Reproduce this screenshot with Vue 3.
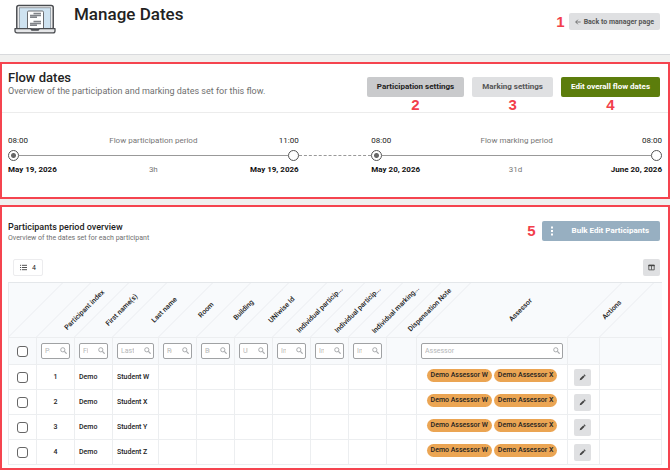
<script setup>
import { ref } from 'vue'

const periods = [
  { start: '08:00', startDate: 'May 19, 2026', label: 'Flow participation period', length: '3h', end: '11:00', endDate: 'May 19, 2026' },
  { start: '08:00', startDate: 'May 20, 2026', label: 'Flow marking period', length: '31d', end: '08:00', endDate: 'June 20, 2026' },
]

const columns = [
  { key: 'index', title: 'Participant index', filter: true },
  { key: 'first', title: 'First name(s)', filter: true },
  { key: 'last', title: 'Last name', filter: true },
  { key: 'room', title: 'Room', filter: true },
  { key: 'building', title: 'Building', filter: true },
  { key: 'uniwise', title: 'UNIwise Id', filter: true },
  { key: 'partStart', title: 'Individual particip...', filter: true },
  { key: 'partEnd', title: 'Individual particip...', filter: true },
  { key: 'marking', title: 'Individual marking...', filter: true },
  { key: 'note', title: 'Dispensation Note', filter: false },
  { key: 'assessor', title: 'Assessor', filter: true },
  { key: 'actions', title: 'Actions', filter: false },
]

const assessors = ['Demo Assessor W', 'Demo Assessor X']
const rows = ref([
  { index: 1, first: 'Demo', last: 'Student W', checked: false },
  { index: 2, first: 'Demo', last: 'Student X', checked: false },
  { index: 3, first: 'Demo', last: 'Student Y', checked: false },
  { index: 4, first: 'Demo', last: 'Student Z', checked: false },
])
</script>

<template>
  <div class="page">
    <header class="top">
      <svg class="laptop" viewBox="0 0 42 30" aria-hidden="true">
        <rect x="2.8" y="1.6" width="36.4" height="24" rx="2" fill="#fff" stroke="#4a4c50" stroke-width="1.5" />
        <rect x="5.2" y="3.8" width="31.6" height="20.6" fill="#cfe3f1" stroke="#6b7077" stroke-width=".7" />
        <path d="M13.5 24.500V8.200q0-1.200 1.200-1.200h13.600q1.200 0 1.200 1.200v16.300z" fill="#fff" stroke="#6a6c70" stroke-width="1" />
        <path d="M19.500 9.500h7.500M16 11.500h11M16 13.300h7M19.500 17.500h7.500M16 19.500h11M16 21.300h7" stroke="#808388" stroke-width="1.500" fill="none" />
        <path d="M1 24.600h15.600l1.400 1.600h6l1.400-1.600H41v2.300q0 1.900-2 1.900H3q-2 0-2-1.900z" fill="#e6e7e9" stroke="#4a4c50" stroke-width="1.300" stroke-linejoin="round" />
      </svg>
      <h1>Manage Dates</h1>
      <div class="marked">
        <button class="btn back" type="button">
          <svg viewBox="0 0 8 8" aria-hidden="true"><path d="M7.500 4H1M3.800 1L.9 4l2.900 3" fill="none" stroke="currentColor" stroke-width="1" /></svg>
          Back to manager page
        </button>
        <span class="mark side">1</span>
      </div>
    </header>

    <section class="panel flow">
      <div class="panel-head">
        <div>
          <h2>Flow dates</h2>
          <p>Overview of the participation and marking dates set for this flow.</p>
        </div>
        <div class="buttons">
          <div class="marked">
            <button class="btn pressed" type="button">Participation settings</button>
            <span class="mark below">2</span>
          </div>
          <div class="marked">
            <button class="btn" type="button">Marking settings</button>
            <span class="mark below">3</span>
          </div>
          <div class="marked">
            <button class="btn green" type="button">Edit overall flow dates</button>
            <span class="mark below">4</span>
          </div>
        </div>
      </div>

      <div class="timeline">
        <template v-for="(p, i) in periods" :key="p.label">
          <div v-if="i" class="pause"></div>
          <div class="period">
            <div class="line-text">
              <span>{{ p.start }}</span><span class="soft">{{ p.label }}</span><span>{{ p.end }}</span>
            </div>
            <div class="track">
              <i class="stop filled"></i><i class="rail"></i><i class="stop"></i>
            </div>
            <div class="line-text dates">
              <b>{{ p.startDate }}</b><span class="soft">{{ p.length }}</span><b>{{ p.endDate }}</b>
            </div>
          </div>
        </template>
      </div>
    </section>

    <section class="panel people">
      <div class="panel-head">
        <div>
          <h3>Participants period overview</h3>
          <p>Overview of the dates set for each participant</p>
        </div>
        <div class="marked">
          <button class="btn bulk" type="button">
            <svg viewBox="0 0 4 10" aria-hidden="true"><path d="M1 .5h2v2H1zM1 4h2v2H1zM1 7.500h2v2H1z" fill="currentColor" /></svg>
            <span>Bulk Edit Participants</span>
          </button>
          <span class="mark side">5</span>
        </div>
      </div>

      <div class="tools">
        <button class="count" type="button">
          <svg viewBox="0 0 8 8" aria-hidden="true"><path d="M0 1.500h1.200M0 4h1.200M0 6.500h1.200M2.200 1.500H8M2.200 4H8M2.200 6.500H8" stroke="currentColor" stroke-width=".9" /></svg>
          4
        </button>
        <button class="square" type="button" aria-label="Columns">
          <svg viewBox="0 0 8 8" aria-hidden="true"><path d="M.9 1.300h6.200v5.400H.9zM4 1.500v5" fill="none" stroke="currentColor" stroke-width=".9" /><path d="M.5 1h7v1.500h-7z" fill="currentColor" /></svg>
        </button>
      </div>

      <div class="table-box">
        <table>
          <colgroup>
            <col class="c-check" />
            <col v-for="c in columns" :key="c.key" :class="'c-' + c.key" />
            <col class="c-rest" />
          </colgroup>
          <thead>
            <tr class="titles">
              <th></th>
              <th v-for="c in columns" :key="c.key" scope="col">
                <div class="slant"><span>{{ c.title }}</span></div>
              </th>
              <th></th>
            </tr>
            <tr class="filters">
              <td class="mid"><input type="checkbox" aria-label="Select all" /></td>
              <td v-for="c in columns" :key="c.key">
                <label v-if="c.filter" class="filter">
                  <input type="text" :placeholder="c.title" :aria-label="c.title" />
                  <svg viewBox="0 0 8 8" aria-hidden="true"><circle cx="3.200" cy="3.200" r="2.400" fill="none" stroke="currentColor" stroke-width="1.100" /><path d="M5 5l2.600 2.600" stroke="currentColor" stroke-width="1.400" /></svg>
                </label>
              </td>
              <td></td>
            </tr>
          </thead>
          <tbody>
            <tr v-for="r in rows" :key="r.index">
              <td class="mid"><input v-model="r.checked" type="checkbox" :aria-label="'Select ' + r.last" /></td>
              <td class="mid">{{ r.index }}</td>
              <td>{{ r.first }}</td>
              <td>{{ r.last }}</td>
              <td v-for="n in 7" :key="n"></td>
              <td class="pills">
                <div><span v-for="a in assessors" :key="a">{{ a }}</span></div>
              </td>
              <td class="edit">
                <button class="square" type="button" :aria-label="'Edit ' + r.last">
                  <svg viewBox="0 0 8 8" aria-hidden="true"><path d="M.8 7.200l.5-2.100L4.800 1.600l1.600 1.600L2.900 6.700zM5.200 1.200l.6-.6q.3-.2.600 0l1 1q.2.300 0 .6l-.6.6z" fill="currentColor" /></svg>
                </button>
              </td>
              <td></td>
            </tr>
          </tbody>
        </table>
      </div>
    </section>
  </div>
</template>

<style>
body {
  background: #f0f0ef;
}
</style>

<style scoped>
.page {
  font-family: Roboto, "Noto Sans", sans-serif;
  font-size: 8px;
  line-height: 10px;
  color: #222;
}
.page * {
  box-sizing: border-box;
}
h1, h2, h3, p {
  margin: 0;
  font-weight: 500;
}
button, input {
  font: inherit;
  color: inherit;
  margin: 0;
}
svg {
  display: block;
  flex: none;
}
.top {
  display: flex;
  align-items: flex-start;
  min-height: 55px;
  padding: 4px 10px 0 14px;
  margin-bottom: 7px;
  background: #fff;
  border-bottom: 1px solid #d9dadd;
}
.laptop {
  width: 42px;
  height: 30px;
}
h1 {
  flex: 1;
  margin-left: 18px;
  font-size: 17px;
  line-height: 20px;
}
.marked {
  position: relative;
}
.top .marked {
  margin-top: 9px;
}
.mark {
  position: absolute;
  font: bold 15px/16px "Liberation Sans", sans-serif;
  color: #f23f4b;
}
.mark.side {
  right: 100%;
  top: 50%;
  margin-right: 4px;
  transform: translateY(-50%);
}
.people .mark.side {
  margin-right: 6px;
}
.mark.below {
  top: 100%;
  left: 0;
  right: 0;
  text-align: center;
}
.btn {
  display: flex;
  align-items: center;
  justify-content: center;
  height: 20px;
  padding: 0 10px;
  border: 0;
  border-radius: 2px;
  background: #dfe0e2;
  color: #555;
  font-weight: 700;
  white-space: nowrap;
}
.btn.back {
  height: 17px;
  padding: 0 6px;
  gap: 3px;
  font-size: 7px;
}
.btn.back svg {
  width: 6px;
  height: 6px;
}
.btn.pressed {
  background: #c9cacc;
  color: #222;
}
.btn.green {
  background: #5c7d0c;
  color: #fff;
}
.btn.bulk {
  padding: 0 11px 0 8px;
  gap: 18px;
  background: #97afc1;
  color: #fff;
}
.btn.bulk svg {
  width: 4px;
  height: 10px;
}
.panel {
  background: #fff;
  border: 2px solid #f5444f;
}
.panel-head {
  display: flex;
  justify-content: space-between;
  align-items: flex-start;
  padding: 0 8px 0 6px;
}
.flow .panel-head {
  height: 49px;
  padding-top: 5px;
  border-bottom: 1px solid #ececec;
}
h2 {
  font-size: 13px;
  line-height: 17px;
}
.panel-head p {
  font-weight: 400;
  color: #6f6f6f;
}
.flow .panel-head p {
  font-size: 9px;
}
.buttons {
  display: flex;
  gap: 8px;
  margin-top: 8px;
}
.timeline {
  display: flex;
  padding: 23px 6px 22px;
}
.period {
  flex: 4;
}
.pause {
  flex: 1;
  margin-top: 19px;
  border-top: 1px dashed #999;
}
.line-text {
  display: flex;
  justify-content: space-between;
}
.line-text > :last-child {
  text-align: right;
}
.soft {
  color: #777;
}
.track {
  display: flex;
  align-items: center;
  padding: 4px 0;
}
.stop {
  width: 11px;
  height: 11px;
  border: 1px solid #555;
  border-radius: 50%;
  background: #fff;
}
.stop.filled {
  background: radial-gradient(circle, #666 2px, #fff 3px);
}
.rail {
  flex: 1;
  height: 1px;
  background: #999;
}
.dates b {
  color: #111;
}
.people {
  margin-top: 6px;
  padding-bottom: 3px;
}
.people .panel-head {
  padding-top: 14px;
}
h3 {
  font-size: 9px;
  line-height: 12px;
}
.people .panel-head p {
  font-size: 7px;
}
.tools {
  display: flex;
  justify-content: space-between;
  padding: 16px 8px 6px 11px;
}
.count {
  display: flex;
  align-items: center;
  gap: 5px;
  height: 17px;
  padding: 0 6px;
  border: 1px solid #ececee;
  border-radius: 2px;
  background: #fff;
  font-size: 7px;
}
.count svg,
.square svg {
  width: 7px;
  height: 7px;
}
.square {
  display: inline-flex;
  align-items: center;
  justify-content: center;
  width: 17px;
  height: 17px;
  padding: 0;
  border: 0;
  border-radius: 2px;
  background: #dfe0e2;
  color: #444;
  vertical-align: middle;
}
.table-box {
  margin: 0 6px;
  overflow: hidden;
}
table {
  width: 100%;
  table-layout: fixed;
  border-spacing: 0;
  font-size: 7px;
  line-height: 8px;
  font-weight: 500;
  border-top: 1px solid #e4e7ea;
  border-left: 1px solid #e9ebed;
}
.c-check { width: 28px; }
.c-index, .c-first, .c-room, .c-building, .c-uniwise, .c-partStart, .c-partEnd, .c-marking { width: 38px; }
.c-last { width: 46px; }
.c-note { width: 30px; }
.c-actions { width: 32px; }
.c-rest { width: 62px; }
thead {
  background: #f8fafc;
}
th, td {
  padding: 0 4px;
  border-bottom: 1px solid #eceef0;
}
td {
  height: 25px;
  border-right: 1px solid #eceef0;
}
.mid {
  text-align: center;
}
td.edit {
  padding: 0 6px;
}
.titles th {
  position: relative;
  height: 55px;
  padding: 0;
  font-weight: 500;
}
.titles th::before {
  content: "";
  position: absolute;
  inset: 0 auto 0 -1px;
  border-left: 1px solid #e9ecef;
  transform: skewX(-45deg);
  transform-origin: bottom left;
}
.slant {
  display: flex;
  align-items: center;
  justify-content: center;
  height: 54px;
  transform: translateX(28px);
}
.slant span {
  flex: none;
  white-space: nowrap;
  transform: rotate(-45deg);
}
.filters td {
  height: 27px;
}
.filter {
  position: relative;
  display: block;
  color: #a5a8ab;
}
.filter input {
  display: block;
  width: 100%;
  height: 16px;
  padding: 0 19px 0 3px;
  border: 1px solid #a0a2a4;
  border-radius: 2px;
  background: #fff;
  color: #333;
  font-weight: 400;
}
.filter input::placeholder {
  color: #b4b6b8;
  opacity: 1;
}
.filter svg {
  position: absolute;
  right: 3px;
  top: 4px;
  width: 7px;
  height: 7px;
}
input[type="checkbox"] {
  appearance: none;
  display: block;
  width: 11px;
  height: 11px;
  margin-left: 4px;
  border: 1px solid #666;
  border-radius: 3px;
  background: #fff;
}
input[type="checkbox"]:checked {
  background: #5c7d0c;
}
.pills div {
  display: flex;
  justify-content: center;
  gap: 2px;
  margin-bottom: 4px;
}
.pills span {
  padding: 0 4px;
  border-radius: 7px;
  background: #eba553;
  line-height: 13px;
  white-space: nowrap;
}
</style>
